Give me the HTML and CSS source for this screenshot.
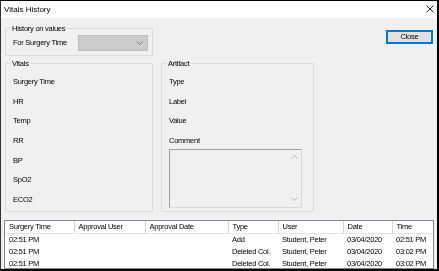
FILE: index.html
```
<!DOCTYPE html>
<html>
<head>
<meta charset="utf-8">
<link rel="stylesheet" href="styles.css">
</head>
<body>
<div class="window">
  <div class="titlebar">
    <span class="title">Vitals History</span>
    <svg class="xicon" width="8" height="8" viewBox="0 0 8 8"><path d="M0.5 0.5 L7.5 7.5 M7.5 0.5 L0.5 7.5" stroke="#111" stroke-width="0.9" fill="none"/></svg>
  </div>
  <div class="content">
    <div class="top-row">
      <div class="group history">
        <span class="group-label">History on values</span>
        <span class="lbl">For Surgery Time</span>
        <div class="combo">
          <svg class="chev" width="7" height="4" viewBox="0 0 7 4"><path d="M0.5 0.5 L3.5 3.5 L6.5 0.5" stroke="#777" stroke-width="0.9" fill="none"/></svg>
        </div>
      </div>
      <button class="close">Close</button>
    </div>
    <div class="mid-row">
      <div class="group vitals">
        <span class="group-label">Vitals</span>
        <span class="lbl">Surgery Time</span>
        <span class="lbl">HR</span>
        <span class="lbl">Temp</span>
        <span class="lbl">RR</span>
        <span class="lbl">BP</span>
        <span class="lbl">SpO2</span>
        <span class="lbl">ECO2</span>
      </div>
      <div class="group artifact">
        <span class="group-label">Artifact</span>
        <span class="lbl">Type</span>
        <span class="lbl">Label</span>
        <span class="lbl">Value</span>
        <span class="lbl">Comment</span>
        <div class="memo">
          <div class="scroll">
            <svg width="7" height="4" viewBox="0 0 7 4"><path d="M0.5 3.5 L3.5 0.5 L6.5 3.5" stroke="#aaa" stroke-width="0.9" fill="none"/></svg>
            <svg width="7" height="4" viewBox="0 0 7 4"><path d="M0.5 0.5 L3.5 3.5 L6.5 0.5" stroke="#aaa" stroke-width="0.9" fill="none"/></svg>
          </div>
        </div>
      </div>
    </div>
    <div class="grid">
      <table>
        <colgroup>
          <col class="c1"><col class="c2"><col class="c3"><col class="c4"><col class="c5"><col class="c6"><col class="c7">
        </colgroup>
        <thead>
          <tr><th>Surgery Time</th><th>Approval User</th><th>Approval Date</th><th>Type</th><th>User</th><th>Date</th><th>Time</th></tr>
        </thead>
        <tbody>
          <tr><td>02:51 PM</td><td></td><td></td><td>Add</td><td>Student, Peter</td><td>03/04/2020</td><td>02:51 PM</td></tr>
          <tr><td>02:51 PM</td><td></td><td></td><td>Deleted Col.</td><td>Student, Peter</td><td>03/04/2020</td><td>03:02 PM</td></tr>
          <tr><td>02:51 PM</td><td></td><td></td><td>Deleted Col.</td><td>Student, Peter</td><td>03/04/2020</td><td>03:02 PM</td></tr>
        </tbody>
      </table>
    </div>
  </div>
</div>
</body>
</html>
```
FILE: styles.css
```
html, body {
  margin: 0;
  padding: 0;
  background: #ffffff;
}
body {
  font-family: "Liberation Sans", Arial, sans-serif;
  font-size: 7.5px;
  letter-spacing: -0.25px;
  color: #000;
}
.window {
  width: 439px;
  height: 271px;
  box-sizing: border-box;
  border-top: 1px solid #000;
  border-left: 1px solid #333;
  border-right: 2px solid #000;
  border-bottom: 2px solid #000;
  display: flex;
  flex-direction: column;
  background: #f0f0f0;
  will-change: transform;
}
.titlebar {
  height: 19px;
  background: #fff;
  display: flex;
  align-items: center;
  justify-content: space-between;
  padding: 0 2px 0 3px;
}
.title {
  font-size: 8px;
  letter-spacing: 0;
  color: #000;
}
.xicon {
  margin-right: 1px;
  margin-top: -1px;
}
.content {
  flex: 1;
  display: flex;
  flex-direction: column;
  padding: 10px 4px 0 3px;
}
.top-row {
  display: flex;
  justify-content: space-between;
  align-items: flex-start;
  padding-left: 1px;
}
.group {
  position: relative;
  border: 1px solid #dcdcdc;
  box-sizing: border-box;
}
.group-label {
  position: absolute;
  top: -5px;
  left: 5px;
  line-height: 9px;
  padding: 0 1px;
  background: #f0f0f0;
}
.lbl {
  line-height: 10px;
}
.history {
  width: 148px;
  height: 28px;
  display: flex;
  align-items: center;
  padding: 1px 4px 0 7px;
}
.history .lbl {
  width: 65px;
}
.combo {
  width: 71px;
  height: 16px;
  box-sizing: border-box;
  border: 1px solid #bcbcbc;
  background: #cccccc;
  display: flex;
  align-items: center;
  justify-content: flex-end;
  padding-right: 4px;
}
.close {
  margin-top: 2px;
  width: 47px;
  height: 14px;
  box-sizing: border-box;
  border: 1px solid #0078d7;
  box-shadow: inset 0 0 0 1px #0078d7;
  background: #e1e1e1;
  font-family: "Liberation Sans", Arial, sans-serif;
  font-size: 7.5px;
  letter-spacing: -0.25px;
  color: #000;
  padding: 0;
  line-height: 10px;
}
.mid-row {
  display: flex;
  gap: 8px;
  margin-top: 7px;
  padding-left: 1px;
}
.vitals, .artifact {
  height: 149px;
  display: flex;
  flex-direction: column;
  gap: 9.7px;
  padding: 13px 0 0 7px;
}
.vitals {
  width: 148px;
}
.artifact {
  width: 153px;
}
.memo {
  margin-top: -7px;
  width: 133px;
  height: 59px;
  box-sizing: border-box;
  border: 1px solid #a0a0a0;
  border-right-color: #d8d8d8;
  border-bottom-color: #d8d8d8;
  background: #f0f0f0;
  display: flex;
  justify-content: flex-end;
}
.scroll {
  width: 13px;
  display: flex;
  flex-direction: column;
  justify-content: space-between;
  align-items: center;
  padding: 5px 0 6px;
}
.grid {
  margin-top: 8px;
  width: 430px;
  height: 49px;
  box-sizing: border-box;
  border: 1px solid #828790;
  background: #fff;
  overflow: hidden;
}
.grid table {
  border-collapse: collapse;
  table-layout: fixed;
  width: 428px;
}
.c1 { width: 69px; }
.c2 { width: 71px; }
.c3 { width: 83px; }
.c4 { width: 50px; }
.c5 { width: 65px; }
.c6 { width: 49px; }
.c7 { width: 41px; }
th {
  font-weight: normal;
  text-align: left;
  height: 12px;
  padding: 0 0 0 4px;
  border-right: 1px solid #d5d5d5;
  border-bottom: 1px solid #e5e5e5;
  line-height: 10px;
  white-space: nowrap;
  overflow: hidden;
}
td {
  height: 12px;
  padding: 0 0 0 4px;
  line-height: 10px;
  white-space: nowrap;
  overflow: hidden;
}
```
